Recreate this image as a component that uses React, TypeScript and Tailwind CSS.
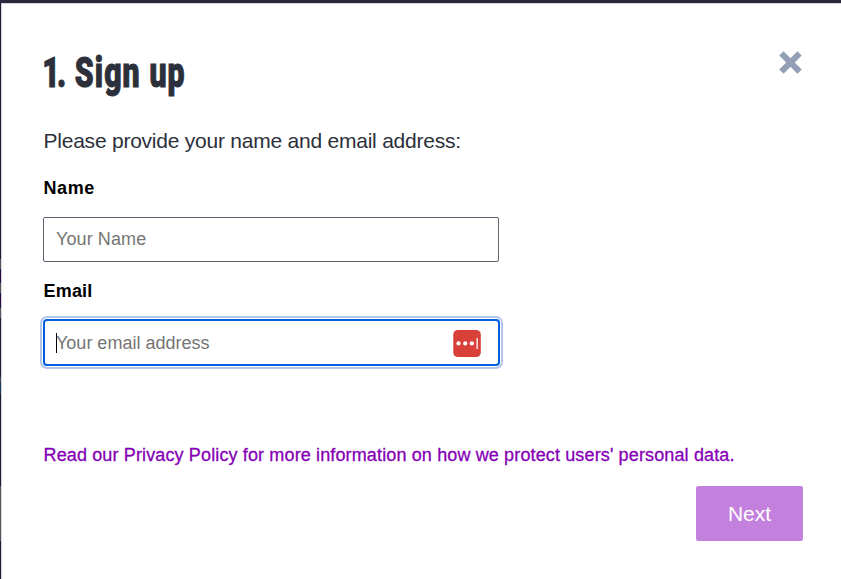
import React from "react";

function CloseIcon() {
  return (
    <svg width="23" height="23" viewBox="0 0 23 23" aria-hidden="true">
      <path d="M2.4 2.4 20.6 20.6M20.6 2.4 2.4 20.6" stroke="#949fb7" strokeWidth="6.2" fill="none" />
    </svg>
  );
}

function PasswordManagerIcon() {
  return (
    <svg width="28" height="27" viewBox="0 0 28 27" className="shrink-0" aria-hidden="true">
      <rect x="0.3" width="27.5" height="27" rx="4.5" fill="#d9403a" />
      <circle cx="5.5" cy="13.4" r="2.1" fill="#fff" />
      <circle cx="12.2" cy="13.4" r="2.1" fill="#fff" />
      <circle cx="18.8" cy="13.4" r="2.1" fill="#fff" />
      <rect x="23.5" y="8" width="1.3" height="11" rx="0.5" fill="#fff" />
    </svg>
  );
}

function PageEdge() {
  return (
    <div className="flex w-px shrink-0 flex-col bg-[#1b1830]">
      <div className="h-[256px]" />
      <div className="h-[10px] bg-[#595860]" />
      <div className="h-[14px] bg-[#2b0a43]" />
      <div className="h-[10px] bg-[#595860]" />
      <div className="h-[15px] bg-[#2b0a43]" />
      <div className="h-[10px] bg-[#595860]" />
      <div className="h-[59px]" />
      <div className="h-[5px] bg-[#4a4a52]" />
      <div className="h-[12px] bg-[#193b5c]" />
      <div className="h-[92px]" />
      <div className="h-[55px] bg-[#55555b]" />
    </div>
  );
}

export default function App() {
  return (
    <div className="flex h-[579px] w-[841px] flex-col overflow-hidden bg-white font-['Liberation_Sans',sans-serif]">
      <div className="h-[3px] shrink-0 bg-[#2b283d]" />
      <div className="flex flex-1">
        <PageEdge />
        <main className="flex flex-1 flex-col border-t border-l border-[#d5d5dc] pr-[38px] pl-[41px]">
          <header className="flex h-[117px] items-start justify-between pt-[43px]">
            <h1 className="mt-px flex origin-left scale-x-[0.72] gap-[16px] font-['Roboto',sans-serif] text-[42px] leading-[50px] font-black whitespace-nowrap text-[#2b303a] [-webkit-text-stroke:1px_#2b303a]">
              <span className="-ml-px tracking-[-4px]">1.</span>
              <span className="tracking-[1.5px]">Sign up</span>
            </h1>
            <button className="mt-[4px] mr-[1px]" aria-label="Close">
              <CloseIcon />
            </button>
          </header>
          <p className="h-[51px] text-[21px] leading-[40px] tracking-[-0.23px] whitespace-nowrap text-[#2b303a]">
            <span className="pl-[0.5px]">Please provide your name and email address:</span>
          </p>
          <label className="h-[45px] text-[18px] leading-[32px] font-bold tracking-[0.6px] text-black">
            <span className="pl-[0.5px]">Name</span>
          </label>
          <div className="flex h-[45px] w-[456px] shrink-0 items-center rounded-[2px] border border-[#63606f] px-3">
            <span className="text-[18px] leading-[41px] tracking-[0.1px] text-[#757575]">Your Name</span>
          </div>
          <label className="mt-[12px] h-[45px] text-[18px] leading-[34px] font-bold tracking-[0.2px] text-black">
            <span className="pl-[0.5px]">Email</span>
          </label>
          <div className="flex h-[47px] w-[457px] shrink-0 items-center rounded-[4px] border-2 border-[#005fe0] pt-px pr-[17px] pl-[11px] outline-2 outline-offset-1 outline-[#b3c7eb]">
            <span className="h-5 w-px bg-black" />
            <span className="-ml-px flex-1 pt-px text-[18px] text-[#757575]">Your email address</span>
            <PasswordManagerIcon />
          </div>
          <a className="mt-[73px] text-[18px] leading-[32px] tracking-[0.135px] whitespace-nowrap text-[#8500b5] [-webkit-text-stroke:0.3px_#8500b5]">
            <span className="pl-[0.5px]">Read our Privacy Policy for more information on how we protect users' personal data.</span>
          </a>
          <button className="mt-[15px] h-[55px] w-[107px] self-end rounded-[2px] bg-[#c381dd] text-[21px] text-white">
            <span>Next</span>
          </button>
        </main>
      </div>
    </div>
  );
}
